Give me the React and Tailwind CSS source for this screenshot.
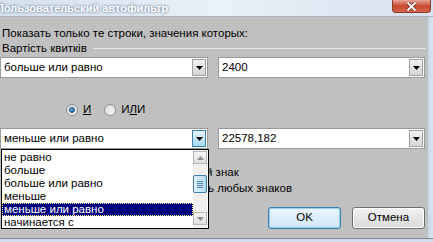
import { useState } from 'react';

const font = { fontFamily: '"Liberation Sans", Arial, sans-serif' };

function Arrow({ hot }) {
  return (
    <div
      className={
        'w-[14px] h-[17px] mt-[1px] mr-[1px] flex items-center justify-center border ' +
        (hot
          ? 'border-[#3c7fb1] bg-gradient-to-b from-[#e5f4fc] to-[#a7d9f5]'
          : 'border-[#a0a0a0] bg-gradient-to-b from-[#f2f2f2] to-[#d6d6d6]')
      }
    >
      <svg width="7" height="4" viewBox="0 0 7 4">
        <path d="M0 0h7L3.5 4z" fill="#000" />
      </svg>
    </div>
  );
}

function Combo({ value, width, hot }) {
  return (
    <div className={'h-[21px] flex bg-white border border-[#9a9a9a] ' + width}>
      <div className="flex-1 pl-[3px] leading-[19px] text-black">{value}</div>
      <Arrow hot={hot} />
    </div>
  );
}

function Radio({ checked, children }) {
  return (
    <div className="flex items-center gap-[5px]">
      <div className="w-[12px] h-[12px] rounded-full border border-[#8d8d8d] bg-gradient-to-br from-[#d8d8d8] to-[#fbfbfb] flex items-center justify-center">
        {checked && <div className="w-[6px] h-[6px] rounded-full bg-gradient-to-br from-[#7ec2f0] to-[#1460a8] border border-[#174a7c]" />}
      </div>
      <span className="text-black">{children}</span>
    </div>
  );
}

const items = ['не равно', 'больше', 'больше или равно', 'меньше', 'меньше или равно', 'начинается с'];

export default function App() {
  const [sel] = useState(4);

  return (
    <div className="w-[433px] h-[242px] relative overflow-hidden flex flex-col bg-[#cfdcec] text-[11.5px]" style={font}>
      {/* Title bar */}
      <div className="h-[17px] flex items-start bg-gradient-to-r from-[#d4e0ee] via-[#eaf0f7] to-[#d6e2ef] border-b border-[#aab4c0]">
        <span
          className="ml-[-4px] mt-[2px] text-[11px] leading-[13px] font-bold text-white"
          style={{ textShadow: '0 0 3px #7d8ea5, 0 0 2px #7d8ea5' }}
        >
          Пользовательский автофильтр
        </span>
        <div className="ml-auto mr-[2px] w-[39px] h-[13px] rounded-b-[4px] border border-t-0 border-[#8c3a2c] bg-gradient-to-b from-[#e6a595] via-[#c8472f] to-[#d4664d] flex items-center justify-center">
          <svg width="11" height="9" viewBox="0 0 11 9">
            <path d="M1.5 0.5l8 8M9.5 0.5l-8 8" stroke="#6b2a20" strokeWidth="3.4" />
            <path d="M1.5 0.5l8 8M9.5 0.5l-8 8" stroke="#fff" strokeWidth="2" />
          </svg>
        </div>
      </div>

      {/* Body */}
      <div className="flex h-[221px]">
        <div className="w-[428px] bg-[#c0c0c0] flex flex-col text-black">
          <div className="ml-[2px] mt-[9px] leading-[14px]">Показать только те строки, значения которых:</div>
          <div className="ml-[2px] mt-[1px] leading-[14px] flex items-center gap-[6px] mr-[2px]">
            <span>Вартість квитків</span>
            <div className="flex-1 h-px bg-[#e6e6e6]" />
          </div>

          <div className="mt-[2px] flex gap-[10px]">
            <Combo value="больше или равно" width="w-[208px]" />
            <Combo value="2400" width="w-[207px]" />
          </div>

          <div className="mt-[25px] h-[14px] flex items-center gap-[13px] pl-[66px]">
            <Radio checked>
              <u>И</u>
            </Radio>
            <Radio>
              И<u>Л</u>И
            </Radio>
          </div>

          <div className="mt-[11px] flex gap-[10px]">
            <Combo value="меньше или равно" width="w-[208px]" hot />
            <Combo value="22578,182" width="w-[207px]" />
          </div>

          {/* hint lines, mostly hidden behind the open list */}
          <div className="mt-[16px] pl-[209px] leading-[14px] overflow-hidden whitespace-nowrap">
            <span className="ml-[-3px]">й знак</span>
          </div>
          <div className="mt-[2px] pl-[209px] leading-[14px] overflow-hidden whitespace-nowrap">
            <span className="ml-[-1px]">ь любых знаков</span>
          </div>

          <div className="mt-[12px] flex justify-end gap-[11px] pr-[3px]">
            <button className="w-[73px] h-[22px] rounded-[3px] border border-[#3c7fb1] bg-gradient-to-b from-[#eaf6fd] to-[#cfe5f4] shadow-[inset_0_0_0_1px_#98d1ef]">
              OK
            </button>
            <button className="w-[73px] h-[22px] rounded-[3px] border border-[#707070] bg-gradient-to-b from-[#f2f2f2] to-[#dadada] shadow-[inset_0_0_0_1px_#fcfcfc]">
              Отмена
            </button>
          </div>
        </div>
        <div className="flex-1 bg-gradient-to-r from-[#c9d8ea] to-[#dbe5f1]" />
      </div>
      <div className="flex-1 border-t border-[#8a8a8a] bg-gradient-to-b from-[#c5d5e9] to-[#dbe5f1]" />

      {/* Open dropdown list */}
      <div className="absolute left-[1px] top-[149px] w-[208px] h-[80px] bg-white border border-black flex">
        <div className="flex-1 pt-[1px]">
          {items.map((t, i) => (
            <div
              key={t}
              className={
                'h-[13px] leading-[13px] pl-[2px] ' +
                (i === sel ? 'bg-[#000080] text-white outline-1 outline-dotted outline-[#ffff80] -outline-offset-1' : 'text-black')
              }
            >
              {t}
            </div>
          ))}
        </div>
        <div className="w-[14px] flex flex-col bg-[#f0f0f0] mr-[1px]">
          <div className="h-[13px] mt-[1px] border border-[#b5b5b5] bg-gradient-to-b from-[#f5f5f5] to-[#dedede] flex items-center justify-center">
            <svg width="7" height="4" viewBox="0 0 7 4">
              <path d="M0 4h7L3.5 0z" fill="#8f8f8f" />
            </svg>
          </div>
          <div className="h-[18px] mt-[11px] rounded-[2px] border border-[#3c7fb1] bg-gradient-to-r from-[#e3f2fb] to-[#b1dcf5] flex flex-col items-center justify-center gap-[1px]">
            <div className="w-[6px] h-px bg-[#4f86b8]" />
            <div className="w-[6px] h-px bg-[#4f86b8]" />
            <div className="w-[6px] h-px bg-[#4f86b8]" />
            <div className="w-[6px] h-px bg-[#4f86b8]" />
          </div>
          <div className="flex-1" />
          <div className="h-[13px] mb-[3px] border border-[#b5b5b5] bg-gradient-to-b from-[#f5f5f5] to-[#dedede] flex items-center justify-center">
            <svg width="7" height="4" viewBox="0 0 7 4">
              <path d="M0 0h7L3.5 4z" fill="#8f8f8f" />
            </svg>
          </div>
        </div>
      </div>
    </div>
  );
}
